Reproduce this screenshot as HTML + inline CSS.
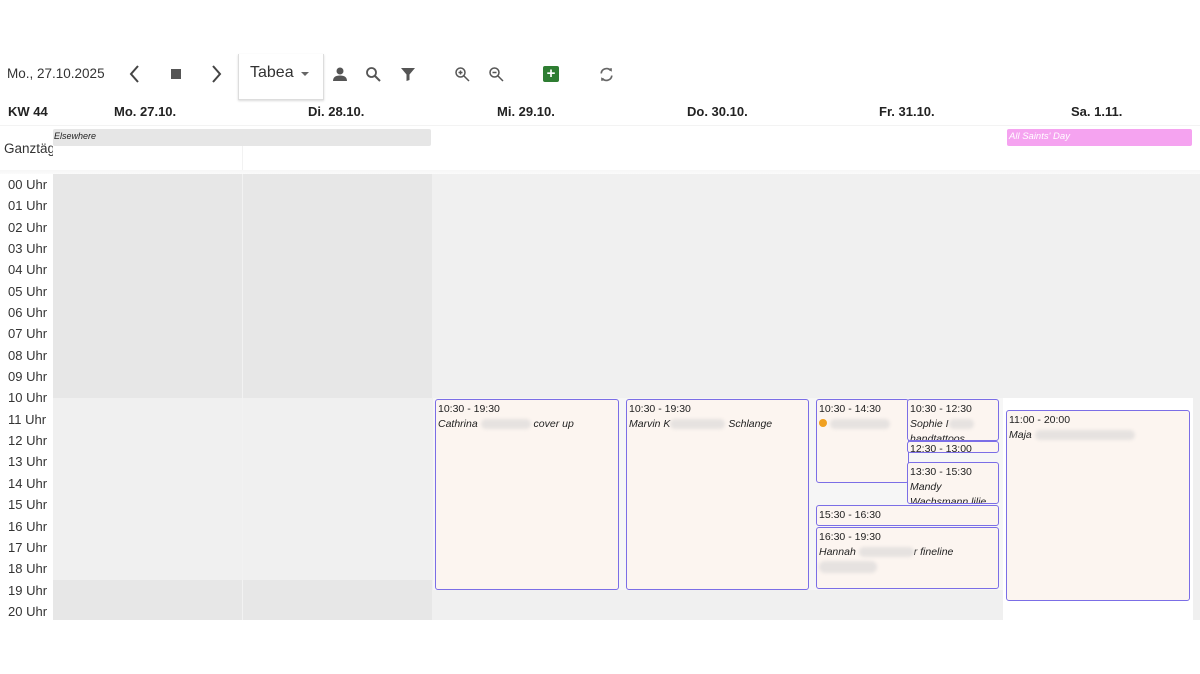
<!DOCTYPE html>
<html><head><meta charset="utf-8"><style>
body{margin:0;width:1200px;height:674px;background:#fff;font-family:"Liberation Sans",sans-serif;position:relative;overflow:hidden;color:#222}
.a{position:absolute}
.hl{font-size:13px;color:#333}
.day{font-weight:bold;font-size:13px;top:104px}
.ev{position:absolute;box-sizing:border-box;border:1.5px solid #7b6ee6;border-radius:3px;background:#fcf5f0;font-size:10.5px;overflow:hidden;padding:2px 2px;line-height:15px}
.ev i{display:block}
.blur{display:inline-block;background:#e6e2e0;border-radius:6px;height:10px;vertical-align:middle;filter:blur(1.5px)}
.ico{position:absolute;top:64px}
</style></head><body>
<div class="a hl" style="left:7px;top:66px;font-size:13.5px">Mo., 27.10.2025</div>
<svg class="ico" style="left:128px" width="14" height="20" viewBox="0 0 14 20"><path d="M10 2 L3 10 L10 18" stroke="#444" stroke-width="2" fill="none"/></svg>
<div class="a" style="left:171px;top:69px;width:10px;height:10px;background:#555"></div>
<svg class="ico" style="left:210px" width="14" height="20" viewBox="0 0 14 20"><path d="M3 2 L10 10 L3 18" stroke="#444" stroke-width="2" fill="none"/></svg>
<div class="a" style="left:238px;top:54px;width:84px;height:45px;border:1px solid #ddd;border-top:none;box-shadow:0 1px 2px rgba(0,0,0,.15)"></div>
<div class="a" style="left:250px;top:64px;font-size:16px;color:#333">Tabea</div>
<div class="a" style="left:301px;top:72px;border:4px solid transparent;border-top:4px solid #666"></div>
<svg class="ico" style="left:332px;top:66px" width="16" height="16" viewBox="0 0 16 16"><circle cx="8" cy="5" r="3.5" fill="#555"/><path d="M1 15 Q1 9.5 8 9.5 Q15 9.5 15 15Z" fill="#555"/></svg>
<svg class="ico" style="left:365px;top:66px" width="16" height="16" viewBox="0 0 16 16"><circle cx="6.5" cy="6.5" r="4.5" stroke="#555" stroke-width="1.8" fill="none"/><path d="M10 10 L15 15" stroke="#555" stroke-width="2"/></svg>
<svg class="ico" style="left:400px;top:66px" width="16" height="16" viewBox="0 0 16 16"><path d="M1 2 H15 L9.5 8.5 V14 L6.5 15 V8.5Z" fill="#555"/></svg>
<svg class="ico" style="left:454px;top:66px" width="16" height="16" viewBox="0 0 16 16"><circle cx="6.5" cy="6.5" r="4.5" stroke="#555" stroke-width="1.5" fill="none"/><path d="M10 10 L15 15M4.5 6.5h4M6.5 4.5v4" stroke="#555" stroke-width="1.5"/></svg>
<svg class="ico" style="left:488px;top:66px" width="16" height="16" viewBox="0 0 16 16"><circle cx="6.5" cy="6.5" r="4.5" stroke="#555" stroke-width="1.5" fill="none"/><path d="M10 10 L15 15M4.5 6.5h4" stroke="#555" stroke-width="1.5"/></svg>
<div class="a" style="left:543px;top:66px;width:16px;height:16px;background:#2e7d32;border-radius:2px;color:#fff;font-weight:bold;font-size:15px;line-height:16px;text-align:center">+</div>
<svg class="ico" style="left:598px;top:66px" width="17" height="17" viewBox="0 0 16 16"><path d="M3 7 A5 5 0 0 1 12 4.5 M13 9 A5 5 0 0 1 4 11.5" stroke="#666" stroke-width="1.6" fill="none"/><path d="M10 2.5 L13 5.5 L13 2Z M6 13.5 L3 10.5 L3 14Z" fill="#666"/></svg>

<div class="a day" style="left:8px">KW 44</div>
<div class="a day" style="left:114px">Mo. 27.10.</div>
<div class="a day" style="left:308px">Di. 28.10.</div>
<div class="a day" style="left:497px">Mi. 29.10.</div>
<div class="a day" style="left:687px">Do. 30.10.</div>
<div class="a day" style="left:879px">Fr. 31.10.</div>
<div class="a day" style="left:1071px">Sa. 1.11.</div>

<div class="a" style="left:0;top:125px;width:1200px;height:1px;background:#f3f3f3"></div>
<div class="a" style="left:53px;top:129px;width:378px;height:17px;background:#e6e6e6;border-radius:2px"></div>
<div class="a" style="left:54px;top:131px;font-size:9px;font-style:italic">Elsewhere</div>
<div class="a" style="left:1007px;top:129px;width:185px;height:17px;background:#f5a3f0;border-radius:2px"></div>
<div class="a" style="left:1009px;top:131px;font-size:9.5px;font-style:italic;color:#fff">All Saints' Day</div>
<div class="a" style="left:4px;top:141px;font-size:13.5px;color:#333;width:49px;overflow:hidden;white-space:nowrap">Ganztägig</div>
<div class="a" style="left:242px;top:146px;width:1px;height:24px;background:#f2f2f2"></div>
<div class="a" style="left:0;top:170px;width:1200px;height:4px;background:linear-gradient(#f6f6f6,#fbfbfb)"></div>

<div class="a" style="left:53px;top:174px;width:1147px;height:446px;background:#f0f0f0"></div>
<div class="a" style="left:53px;top:174px;width:379px;height:224px;background:#e7e7e7"></div>
<div class="a" style="left:53px;top:580px;width:379px;height:40px;background:#e7e7e7"></div>
<div class="a" style="left:242px;top:174px;width:1px;height:446px;background:#f2f2f2"></div>
<div class="a" style="left:433px;top:398px;width:570px;height:192px;background:#f6f6f6"></div>
<div class="a" style="left:1003px;top:398px;width:190px;height:222px;background:#fff"></div>

<div class="a hl" style="left:8px;top:174px;line-height:21.35px;font-size:13px">00 Uhr<br>01 Uhr<br>02 Uhr<br>03 Uhr<br>04 Uhr<br>05 Uhr<br>06 Uhr<br>07 Uhr<br>08 Uhr<br>09 Uhr<br>10 Uhr<br>11 Uhr<br>12 Uhr<br>13 Uhr<br>14 Uhr<br>15 Uhr<br>16 Uhr<br>17 Uhr<br>18 Uhr<br>19 Uhr<br>20 Uhr</div>

<div class="ev" style="left:435px;top:399px;width:184px;height:191px">10:30 - 19:30<i>Cathrina <span class="blur" style="width:50px"></span> cover up</i></div>
<div class="ev" style="left:626px;top:399px;width:183px;height:191px">10:30 - 19:30<i>Marvin K<span class="blur" style="width:55px"></span> Schlange</i></div>
<div class="ev" style="left:816px;top:399px;width:93px;height:84px">10:30 - 14:30<br><span style="display:inline-block;width:8px;height:8px;border-radius:50%;background:#f0a020"></span> <span class="blur" style="width:60px"></span></div>
<div class="ev" style="left:907px;top:399px;width:92px;height:42px">10:30 - 12:30<i>Sophie I<span class="blur" style="width:25px"></span></i><i>handtattoos</i></div>
<div class="ev" style="left:907px;top:441px;width:92px;height:12px;line-height:14px;padding-top:0">12:30 - 13:00</div>
<div class="ev" style="left:907px;top:462px;width:92px;height:42px">13:30 - 15:30<i>Mandy</i><i>Wachsmann lilie</i></div>
<div class="ev" style="left:816px;top:505px;width:183px;height:21px">15:30 - 16:30</div>
<div class="ev" style="left:816px;top:527px;width:183px;height:62px">16:30 - 19:30<i>Hannah <span class="blur" style="width:55px"></span>r fineline</i><span class="blur" style="width:58px;height:12px"></span></div>
<div class="ev" style="left:1006px;top:410px;width:184px;height:191px">11:00 - 20:00<i>Maja <span class="blur" style="width:100px"></span></i></div>
</body></html>
